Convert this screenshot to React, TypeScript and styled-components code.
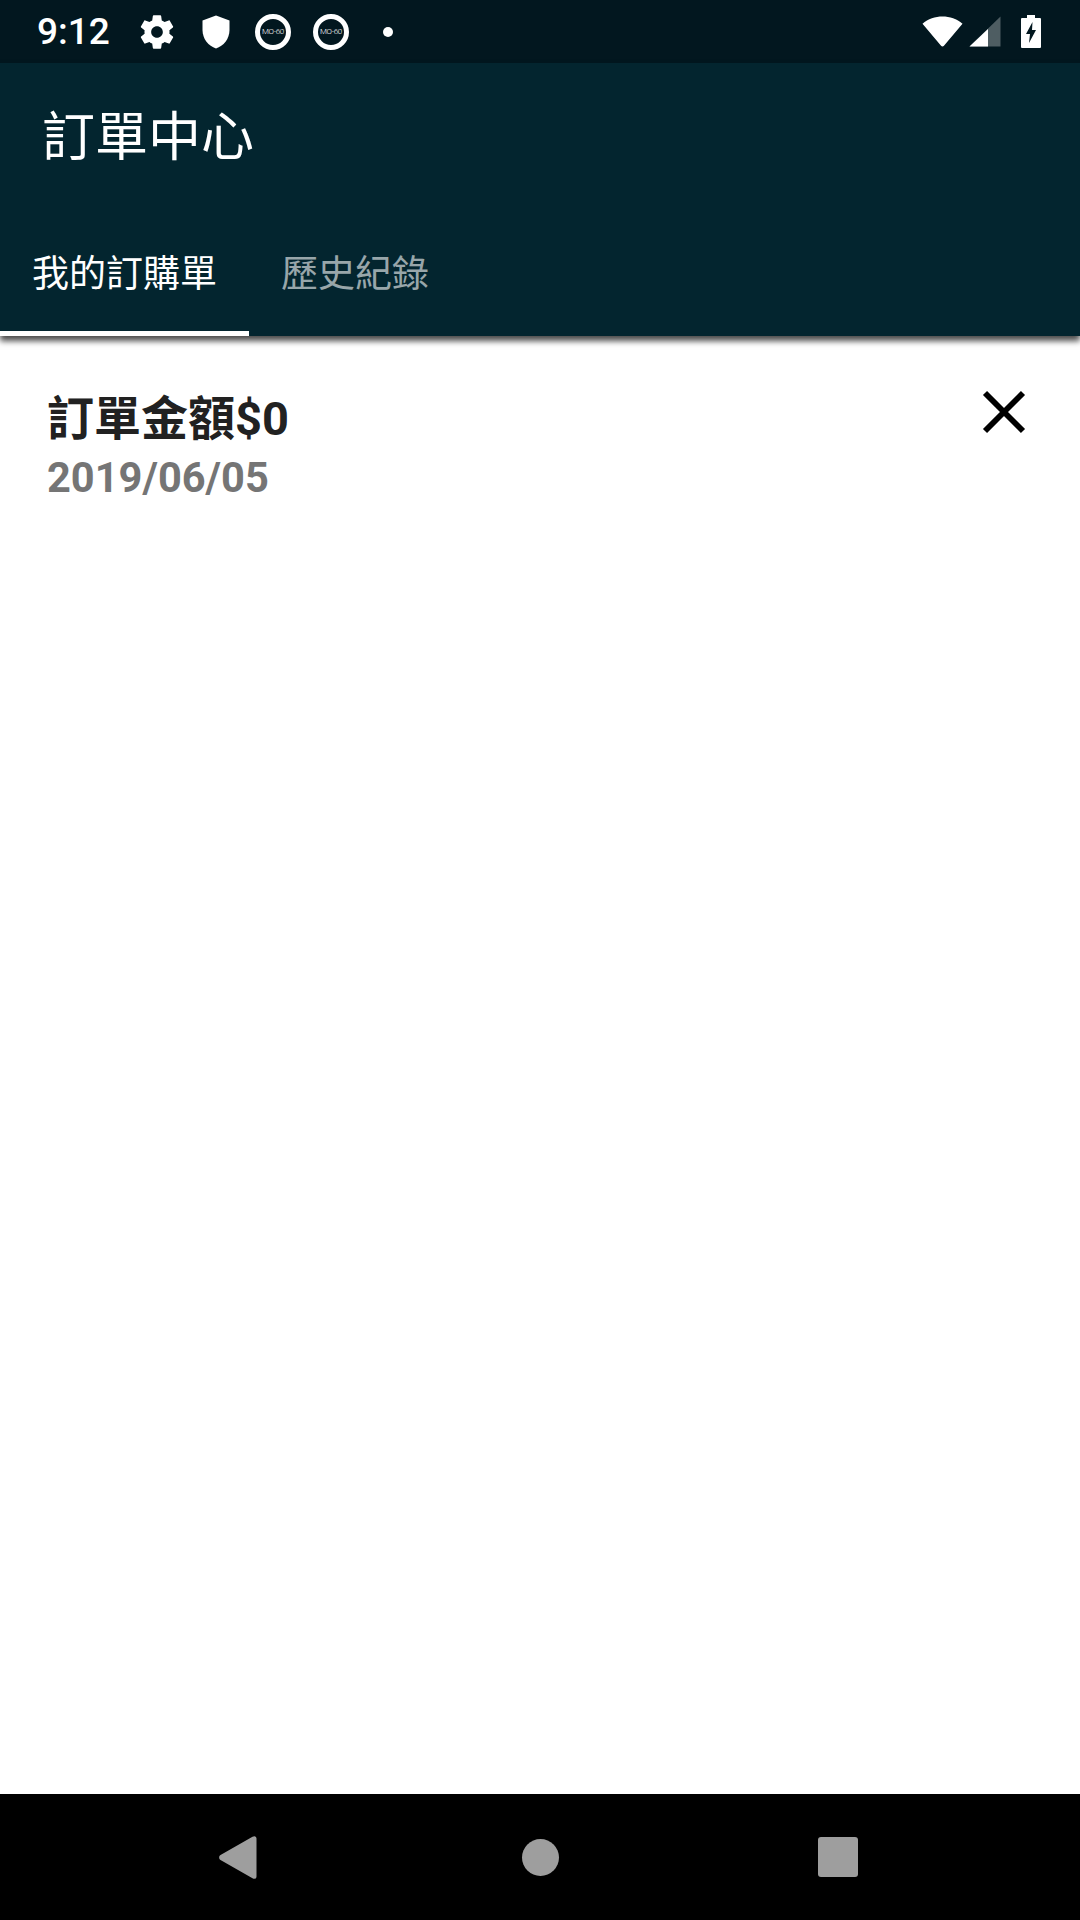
import React from 'react'
import styled, { createGlobalStyle } from 'styled-components'

const TC_STACK = `Roboto, 'Noto Sans CJK TC', sans-serif`

const Global = createGlobalStyle`
  html, body {
    margin: 0;
    padding: 0;
    background: #fff;
  }
  * {
    box-sizing: border-box;
  }
`

const GearIcon = () => (
  <svg width="40" height="40" viewBox="0 0 24 24" fill="#fff">
    <path d="M19.43 12.98c.04-.32.07-.64.07-.98s-.03-.66-.07-.98l2.11-1.65c.19-.15.24-.42.12-.64l-2-3.46c-.12-.22-.39-.3-.61-.22l-2.49 1c-.52-.4-1.08-.73-1.69-.98l-.38-2.65C14.46 2.18 14.25 2 14 2h-4c-.25 0-.46.18-.49.42l-.38 2.65c-.61.25-1.17.59-1.69.98l-2.49-1c-.23-.09-.49 0-.61.22l-2 3.46c-.13.22-.07.49.12.64l2.11 1.65c-.04.32-.07.65-.07.98s.03.66.07.98l-2.11 1.65c-.19.15-.24.42-.12.64l2 3.46c.12.22.39.3.61.22l2.49-1c.52.4 1.08.73 1.69.98l.38 2.65c.03.24.24.42.49.42h4c.25 0 .46-.18.49-.42l.38-2.65c.61-.25 1.17-.59 1.69-.98l2.49 1c.23.09.49 0 .61-.22l2-3.46c.12-.22.07-.49-.12-.64l-2.11-1.65zM12 15.5c-1.93 0-3.5-1.57-3.5-3.5s1.57-3.5 3.5-3.5 3.5 1.57 3.5 3.5-1.57 3.5-3.5 3.5z" />
  </svg>
)

const ShieldIcon = () => (
  <svg width="28" height="34" viewBox="0 0 28 34" fill="#fff">
    <path d="M14 0.5 L27.5 5.5 V15 C27.5 24 21.5 31 14 33.5 C6.5 31 0.5 24 0.5 15 V5.5 Z" />
  </svg>
)

const WifiIcon = () => (
  <svg width="41" height="31" viewBox="0 0 42 31" fill="#fff">
    <path d="M0.5 7.5 C12 -2.2 30 -2.2 41.5 7.5 L22.5 30 C21.7 31 20.3 31 19.5 30 Z" />
  </svg>
)

const SignalIcon = () => (
  <svg width="32" height="31" viewBox="0 0 32 31">
    <path d="M31.5 0.5 V30.5 H0.5 Z" fill="#fff" fillOpacity="0.3" />
    <path d="M19 13 V30.5 H0.5 Z" fill="#fff" />
  </svg>
)

const BatteryIcon = () => (
  <svg width="20" height="33" viewBox="0 0 20 33">
    <path d="M6 0 H14 V3 H19 A1 1 0 0 1 20 4 V32 A1 1 0 0 1 19 33 H1 A1 1 0 0 1 0 32 V4 A1 1 0 0 1 1 3 H6 Z" fill="#fff" />
    <path d="M11.5 7 L5 19 H9 L8 28 L15 15 H11 Z" fill="#02171f" />
  </svg>
)

const CloseIcon = () => (
  <svg width="44" height="44" viewBox="0 0 44 44" stroke="#000" strokeWidth="5.8" fill="none">
    <path d="M3 3 L41 41 M41 3 L3 41" />
  </svg>
)

const BackIcon = () => (
  <svg width="38" height="43" viewBox="0 0 38 43" fill="#9e9e9e">
    <path d="M33.5 0.8 C35.5 -0.6 37.5 0.3 37.5 2.5 V40.5 C37.5 42.7 35.5 43.6 33.5 42.2 L1.5 24 C-0.3 22.8 -0.3 20.2 1.5 19 Z" />
  </svg>
)

export default function App() {
  return (
    <Screen>
      <Global />
      <StatusBar>
        <StatusGroup>
          <Clock>9:12</Clock>
          <Notifications>
            <GearIcon />
            <ShieldIcon />
            <Ring>
              <RingLabel>MO-60</RingLabel>
            </Ring>
            <Ring>
              <RingLabel>MO-60</RingLabel>
            </Ring>
            <Dot />
          </Notifications>
        </StatusGroup>
        <SystemIcons>
          <WifiIcon />
          <SignalIcon />
          <BatteryIcon />
        </SystemIcons>
      </StatusBar>

      <AppBar>
        <Title>訂單中心</Title>
        <Tabs>
          <Tab $active>我的訂購單</Tab>
          <Tab>歷史紀錄</Tab>
        </Tabs>
      </AppBar>

      <Content>
        <OrderRow>
          <OrderInfo>
            <OrderAmount>訂單金額$0</OrderAmount>
            <OrderDate>2019/06/05</OrderDate>
          </OrderInfo>
          <CloseButton aria-label="close">
            <CloseIcon />
          </CloseButton>
        </OrderRow>
      </Content>

      <NavBar>
        <NavSlot>
          <BackIcon />
        </NavSlot>
        <NavSlot>
          <HomeDot />
        </NavSlot>
        <NavSlot>
          <RecentSquare />
        </NavSlot>
      </NavBar>
    </Screen>
  )
}

const Screen = styled.div`
  width: 1080px;
  height: 1920px;
  display: flex;
  flex-direction: column;
  overflow: hidden;
  font-family: ${TC_STACK};
`

const StatusBar = styled.div`
  height: 63px;
  flex: none;
  display: flex;
  align-items: center;
  justify-content: space-between;
  padding: 0 38px 0 37px;
  background: #02171f;
  color: #fff;
`

const StatusGroup = styled.div`
  display: flex;
  align-items: center;
`

const Clock = styled.div`
  width: 100px;
  font-size: 37px;
  font-weight: 500;
  line-height: 63px;
`

const Notifications = styled.div`
  display: flex;
  align-items: center;
  gap: 22px;

  svg:nth-child(1) {
    margin-right: 3px;
  }
  svg:nth-child(2) {
    margin-right: 3px;
  }
`

const Ring = styled.div`
  width: 36px;
  height: 36px;
  border: 5px solid #fff;
  border-radius: 50%;
  display: flex;
  align-items: center;
  justify-content: center;
`

const RingLabel = styled.span`
  font-size: 8px;
  font-weight: 300;
  line-height: 1;
  white-space: nowrap;
  letter-spacing: -0.3px;
`

const Dot = styled.div`
  width: 10px;
  height: 10px;
  margin-left: 12px;
  border-radius: 50%;
  background: #fff;
`

const SystemIcons = styled.div`
  display: flex;
  align-items: center;
  gap: 6px;

  svg:last-child {
    margin-left: 14px;
    margin-right: 1px;
  }
`

const AppBar = styled.div`
  height: 273px;
  flex: none;
  display: flex;
  flex-direction: column;
  justify-content: space-between;
  background: #03252f;
  box-shadow: 0 5px 6px rgba(0, 0, 0, 0.7);
  position: relative;
`

const Title = styled.div`
  padding: 44px 0 0 42px;
  font-size: 53px;
  line-height: 62px;
  color: #fff;
`

const Tabs = styled.div`
  display: flex;
`

const Tab = styled.div<{ $active?: boolean }>`
  width: 249px;
  height: 92px;
  padding: 0 0 7px 32px;
  margin-right: ${p => (p.$active ? '32px' : '0')};
  font-size: 37px;
  line-height: 62px;
  white-space: nowrap;
  color: ${p => (p.$active ? '#fff' : 'rgba(255, 255, 255, 0.6)')};
  border-bottom: 5px solid ${p => (p.$active ? '#fff' : 'transparent')};
  ${p => !p.$active && 'padding-left: 0;'}
`

const Content = styled.div`
  flex: 1;
  background: #fff;
`

const OrderRow = styled.div`
  display: flex;
  justify-content: space-between;
  align-items: flex-start;
  padding: 55px 54px 0 47px;
`

const OrderInfo = styled.div`
  display: flex;
  flex-direction: column;
`

const OrderAmount = styled.div`
  font-size: 47px;
  font-weight: 700;
  line-height: 56px;
  color: #212121;
`

const OrderDate = styled.div`
  font-size: 41.6px;
  font-weight: 700;
  line-height: 62px;
  color: #757575;
`

const CloseButton = styled.div`
  margin-top: -1px;
  line-height: 0;
`

const NavBar = styled.div`
  height: 126px;
  flex: none;
  display: flex;
  align-items: center;
  justify-content: center;
  gap: 220px;
  padding-right: 4px;
  background: #000;
`

const NavSlot = styled.div`
  width: 80px;
  display: flex;
  align-items: center;
  justify-content: center;
`

const HomeDot = styled.div`
  width: 37px;
  height: 37px;
  margin-left: 4px;
  border-radius: 50%;
  background: #9e9e9e;
`

const RecentSquare = styled.div`
  width: 40px;
  height: 40px;
  border-radius: 3px;
  background: #9e9e9e;
`
